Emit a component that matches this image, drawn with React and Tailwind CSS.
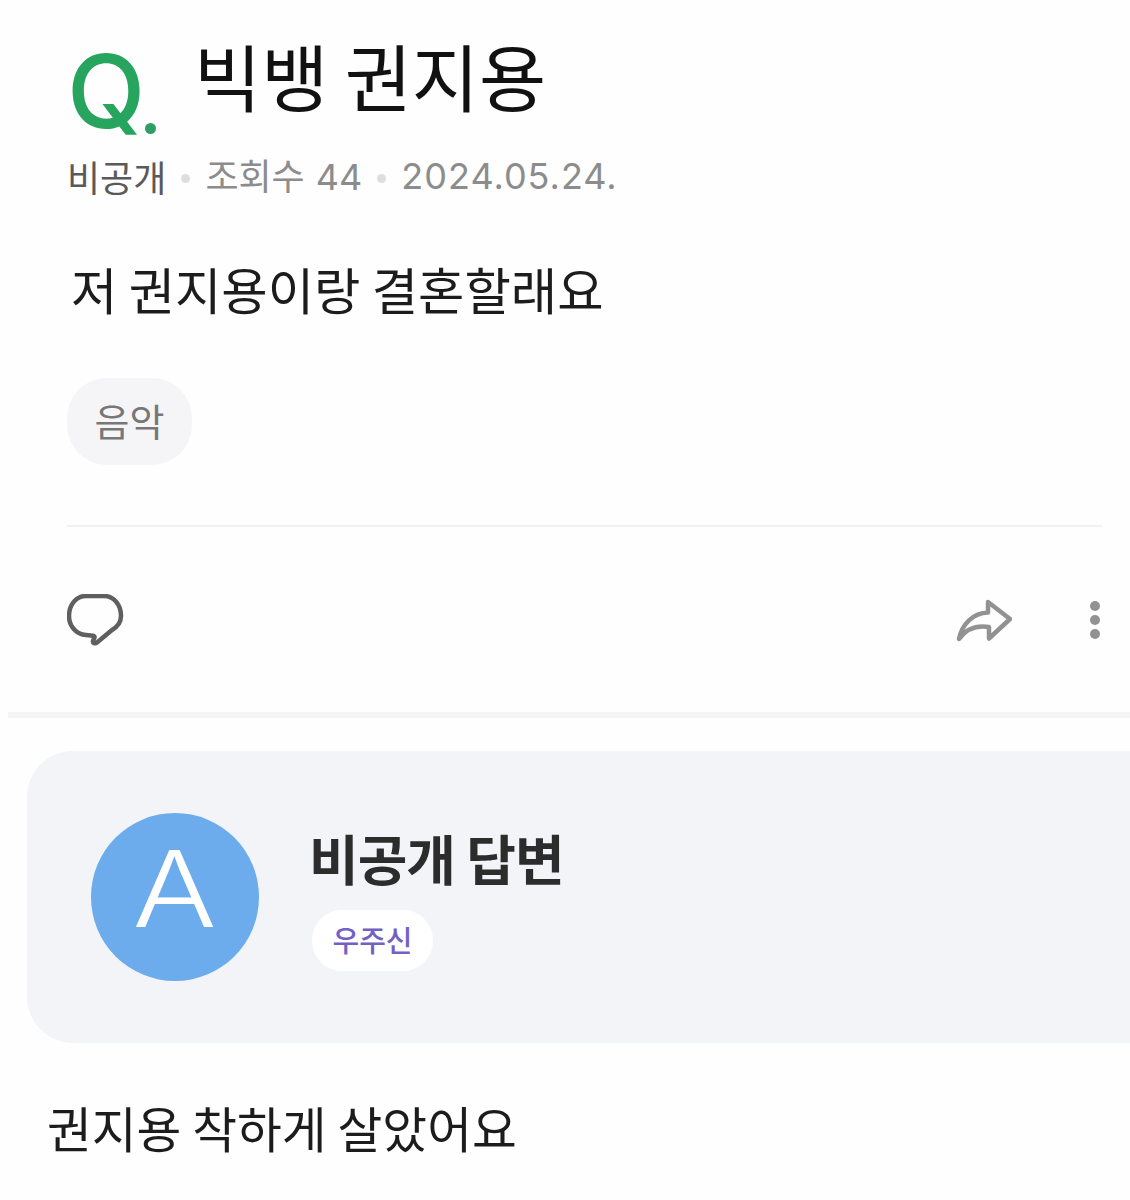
import React from 'react'

function CommentIcon() {
  return (
    <svg width="58" height="54" viewBox="0 0 58 54" fill="none">
      <path
        d="M19 2H37C47 2 54 11 54 22C54 29 50 33 45 36L30 48.500C28 50.200 25.500 49 26 47L27.500 43.500C27.800 42.500 27 41.800 26 41.700L19 41C9 40.500 2 32 2 22C2 11 9 2 19 2Z"
        stroke="#5f5f5f" strokeWidth="4.500" strokeLinejoin="round"
      />
    </svg>
  )
}

function ShareIcon() {
  return (
    <svg width="56" height="46" viewBox="0 0 56 46" fill="none">
      <path
        d="M3 41C6 26 17 15 32 14.500V4L54 21L33 40.500V29C20 27 10 31 3 41Z"
        stroke="#929292" strokeWidth="4.500" strokeLinejoin="round"
      />
    </svg>
  )
}

function Dot() {
  return <span className="w-[9px] h-[9px] rounded-full bg-[#dedede] mt-[6px]" />
}

export default function App() {
  return (
    <div className="w-[1130px] h-[1200px] overflow-hidden bg-[#fefefe] font-['Noto_Sans_CJK_KR','Noto_Sans',sans-serif]">
      <div className="pl-[67px] pr-[28px] pt-[36px]">
        <div className="flex items-start h-[110px]">
          <div className="w-[127px] flex items-start">
            <span className="text-[#27a55f] font-['Inter',sans-serif] font-medium text-[102px] leading-[110px]">Q</span>
            <span className="w-[11px] h-[11px] rounded-full bg-[#2f9e64] mt-[87px]" />
          </div>
          <h1 className="text-[73px] leading-[76px] text-[#111]">빅뱅 권지용</h1>
        </div>

        <div className="flex items-center gap-[15px] mt-[3px] text-[36px] leading-[50px] text-[#8c8c8c]">
          <span className="text-[#5a5a5a]">비공개</span>
          <Dot />
          <span>조회수 <span className="font-['Inter',sans-serif] ml-[3px]">44</span></span>
          <Dot />
          <span className="font-['Inter',sans-serif] tracking-[1px]">2024.05.24.</span>
        </div>

        <p className="mt-[54px] ml-[4px] text-[50.400px] leading-[66px] text-[#1c1c1c]">저 권지용이랑 결혼할래요</p>

        <div className="mt-[56px] w-[125px] h-[87px] pb-[4px] rounded-[40px] bg-[#f5f5f7] flex items-center justify-center text-[38px] text-[#777]">
          음악
        </div>

        <div className="mt-[60px] h-[2px] bg-[#f1f1f1]" />

        <div className="mt-[67px] flex items-center h-[54px]">
          <CommentIcon />
          <div className="ml-auto"><ShareIcon /></div>
          <div className="ml-[78px] mr-[2px] mb-[2px] flex flex-col gap-[4px]">
            <span className="w-[10px] h-[10px] rounded-full bg-[#929292]" />
            <span className="w-[10px] h-[10px] rounded-full bg-[#929292]" />
            <span className="w-[10px] h-[10px] rounded-full bg-[#929292]" />
          </div>
        </div>
      </div>

      <div className="mt-[64px] ml-[8px] h-[6px] bg-[#f4f4f4]" />

      <div className="mt-[33px] ml-[27px] h-[292px] rounded-l-[46px] bg-[#f3f4f8] flex items-center pl-[64px]">
        <div className="w-[168px] h-[168px] pb-[16px] rounded-full bg-[#6caced] flex items-center justify-center text-white font-['Inter',sans-serif] font-light text-[106px] leading-none">
          <span className="inline-block scale-x-[1.18]">A</span>
        </div>
        <div className="ml-[50px]">
          <h2 className="text-[54px] leading-[68px] font-bold text-[#2c2c2c] tracking-[-1px]">비공개 답변</h2>
          <div className="mt-[18px] ml-[3px] w-[121px] h-[61px] rounded-[30px] bg-white flex items-center justify-center text-[29px] font-medium text-[#7360c4]">
            우주신
          </div>
        </div>
      </div>

      <p className="mt-[51px] ml-[47px] text-[48.700px] leading-[66px] text-[#1c1c1c]">권지용 착하게 살았어요</p>
    </div>
  )
}
